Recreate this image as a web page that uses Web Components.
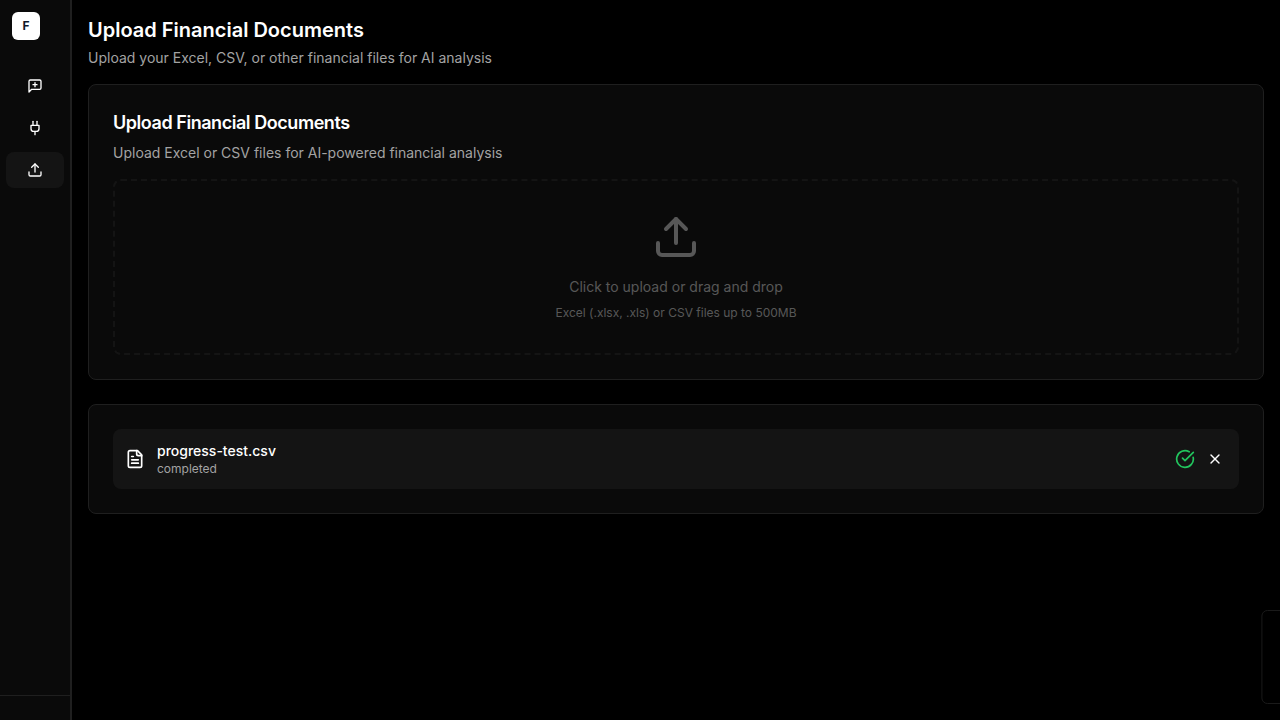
<!DOCTYPE html>
<html lang="en">
<head>
<meta charset="utf-8">
<title>Upload Financial Documents</title>
<style>
html, body { margin: 0; height: 100%; background: #000; overflow: hidden; }
body { font-family: Inter, "Liberation Sans", sans-serif; color: #fff; font-size: 14px; line-height: 20px; }
</style>
</head>
<body>
<app-shell>
  <side-bar slot="sidebar"></side-bar>
  <page-header slot="header">
    <span slot="title">Upload Financial Documents</span>
    <span slot="description">Upload your Excel, CSV, or other financial files for AI analysis</span>
  </page-header>
  <ui-card>
    <card-header>
      <span slot="title">Upload Financial Documents</span>
      <span slot="description">Upload Excel or CSV files for AI-powered financial analysis</span>
    </card-header>
    <drop-zone>
      <span slot="label">Click to upload or drag and drop</span>
      <span slot="hint">Excel (.xlsx, .xls) or CSV files up to 500MB</span>
    </drop-zone>
  </ui-card>
  <ui-card>
    <file-row>
      <span slot="name">progress-test.csv</span>
      <span slot="status">completed</span>
    </file-row>
  </ui-card>
  <toast-edge slot="overlay"></toast-edge>
</app-shell>
<script>
const ICONS = {
  message: '<path d="M21 15a2 2 0 0 1-2 2H7l-4 4V5a2 2 0 0 1 2-2h14a2 2 0 0 1 2 2z"/><path d="M12 7v6"/><path d="M9 10h6"/>',
  plug: '<path d="M12 22v-5"/><path d="M9 8V2"/><path d="M15 8V2"/><path d="M18 8v5a4 4 0 0 1-4 4h-4a4 4 0 0 1-4-4V8Z"/>',
  upload: '<path d="M12 3v12"/><path d="m17 8-5-5-5 5"/><path d="M21 15v4a2 2 0 0 1-2 2H5a2 2 0 0 1-2-2v-4"/>',
  file: '<path d="M15 2H6a2 2 0 0 0-2 2v16a2 2 0 0 0 2 2h12a2 2 0 0 0 2-2V7Z"/><path d="M14 2v4a2 2 0 0 0 2 2h4"/><path d="M10 9H8"/><path d="M16 13H8"/><path d="M16 17H8"/>',
  check: '<path d="M21.801 10A10 10 0 1 1 17 3.335"/><path d="m9 11 3 3L22 4"/>',
  close: '<path d="M18 6 6 18"/><path d="m6 6 12 12"/>'
};

function define(name, markup) {
  customElements.define(name, class extends HTMLElement {
    constructor() {
      super();
      this.attachShadow({ mode: 'open' }).innerHTML = markup;
    }
  });
}

customElements.define('ui-icon', class extends HTMLElement {
  connectedCallback() {
    const size = this.getAttribute('size') || 16;
    const root = this.shadowRoot || this.attachShadow({ mode: 'open' });
    root.innerHTML = `<style>:host{display:block;flex:none}svg{display:block}</style>
      <svg width="${size}" height="${size}" viewBox="0 0 24 24" fill="none" stroke="currentColor" stroke-width="2" stroke-linecap="round" stroke-linejoin="round">${ICONS[this.getAttribute('name')]}</svg>`;
  }
});

define('app-shell', `<style>
  :host { display: flex; height: 100vh; overflow: hidden; position: relative; }
  main { flex: 1; min-width: 0; padding: 16px; display: flex; flex-direction: column; gap: 16px; }
  section { display: flex; flex-direction: column; gap: 24px; }
</style><slot name="sidebar"></slot><main><slot name="header"></slot><section><slot></slot></section></main><slot name="overlay"></slot>`);

define('nav-item', `<style>
  :host { display: flex; align-items: center; justify-content: center; height: 36px; border-radius: 8px; }
  :host([active]) { background: #141414; }
</style><slot></slot>`);

define('side-bar', `<style>
  :host { display: flex; flex-direction: column; box-sizing: border-box; width: 72px; flex: none; background: #0a0a0a; border-right: 2px solid #1f1f1f; }
  .logo { display: flex; align-items: center; justify-content: center; width: 28px; height: 28px; margin: 12px 12px 28px; border-radius: 6px; background: #fff; color: #0f172a; font-size: 12px; font-weight: 700; line-height: 16px; }
  nav { flex: 1; display: flex; flex-direction: column; gap: 6px; padding: 0 6px; }
  footer { height: 24px; border-top: 1px solid #1f1f1f; }
</style>
<div class="logo">F</div>
<nav>
  <nav-item><ui-icon name="message"></ui-icon></nav-item>
  <nav-item><ui-icon name="plug"></ui-icon></nav-item>
  <nav-item active><ui-icon name="upload"></ui-icon></nav-item>
</nav>
<footer></footer>`);

define('page-header', `<style>
  :host { display: flex; flex-direction: column; gap: 4px; }
  h1 { margin: 0; font-size: 20px; line-height: 28px; font-weight: 600; }
  p { margin: 0; color: #a3a3a3; }
</style><h1><slot name="title"></slot></h1><p><slot name="description"></slot></p>`);

define('ui-card', `<style>
  :host { display: block; padding: 24px; border: 1px solid #1f1f1f; border-radius: 8px; background: #0a0a0a; }
</style><slot></slot>`);

define('card-header', `<style>
  :host { display: flex; flex-direction: column; gap: 6px; margin-bottom: 16px; }
  h2 { margin: 0; font-size: 18px; line-height: 28px; font-weight: 600; letter-spacing: -0.45px; }
  p { margin: 0; color: #a3a3a3; }
</style><h2><slot name="title"></slot></h2><p><slot name="description"></slot></p>`);

define('drop-zone', `<style>
  :host { display: flex; flex-direction: column; align-items: center; padding: 32px; border: 2px dashed #1f1f1f; border-radius: 8px; color: #a3a3a3; opacity: .5; }
  .label { margin: 16px 0 8px; }
  .hint { font-size: 12px; line-height: 16px; }
</style><ui-icon name="upload" size="48"></ui-icon>
<div class="label"><slot name="label"></slot></div><div class="hint"><slot name="hint"></slot></div>`);

define('file-row', `<style>
  :host { display: flex; align-items: center; gap: 12px; padding: 12px; border-radius: 8px; background: #141414; }
  .text { flex: 1; }
  .name { font-weight: 500; }
  .status { font-size: 12px; line-height: 16px; color: #a3a3a3; }
  .actions { display: flex; align-items: center; gap: 8px; }
  .done { color: #22c55e; }
  .remove { padding: 4px; }
</style><ui-icon name="file" size="20"></ui-icon>
<div class="text"><div class="name"><slot name="name"></slot></div><div class="status"><slot name="status"></slot></div></div>
<div class="actions"><ui-icon class="done" name="check" size="20"></ui-icon><ui-icon class="remove" name="close"></ui-icon></div>`);

define('toast-edge', `<style>
  :host { display: block; position: absolute; right: -340px; bottom: 16px; width: 358px; height: 94px; box-sizing: border-box; border: 1px solid #1a1a1a; border-radius: 6px; transform: translateX(-.6px); }
</style>`);
</script>
</body>
</html>
